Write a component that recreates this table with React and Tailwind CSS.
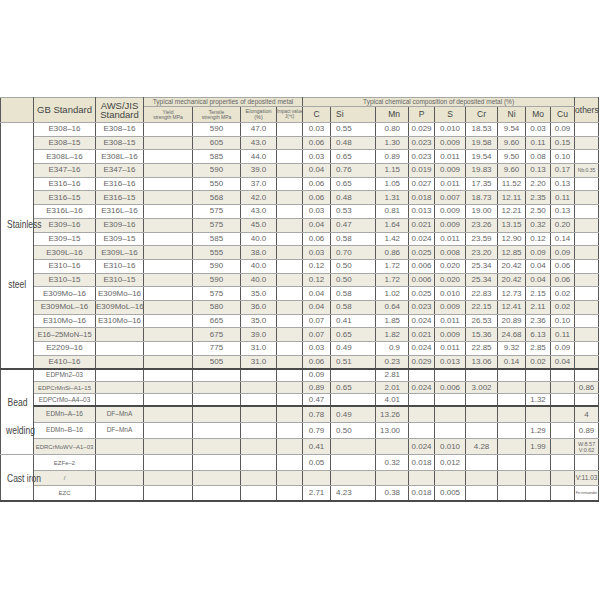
import React from 'react';

const colWidths = [33, 62, 48, 49, 48, 36, 26, 28, 45, 33, 26, 31, 32, 28, 25, 24, 24];

const stainless = [
  ['E308–16', 'E308–16', '590', '47.0', ['0.03', '0.55', '0.80', '0.029', '0.010', '18.53', '9.54', '0.03', '0.09'], ''],
  ['E308–15', 'E308–15', '605', '43.0', ['0.06', '0.48', '1.30', '0.023', '0.009', '19.58', '9.60', '0.11', '0.15'], ''],
  ['E308L–16', 'E308L–16', '585', '44.0', ['0.03', '0.65', '0.89', '0.023', '0.011', '19.54', '9.50', '0.08', '0.10'], ''],
  ['E347–16', 'E347–16', '590', '39.0', ['0.04', '0.76', '1.15', '0.019', '0.009', '19.83', '9.60', '0.13', '0.17'], 'Nb:0.35'],
  ['E316–16', 'E316–16', '550', '37.0', ['0.06', '0.65', '1.05', '0.027', '0.011', '17.35', '11.52', '2.20', '0.13'], ''],
  ['E316–15', 'E316–15', '568', '42.0', ['0.06', '0.48', '1.31', '0.018', '0.007', '18.73', '12.11', '2.35', '0.11'], ''],
  ['E316L–16', 'E316L–16', '575', '43.0', ['0.03', '0.53', '0.81', '0.013', '0.009', '19.00', '12.21', '2.50', '0.13'], ''],
  ['E309–16', 'E309–16', '575', '45.0', ['0.04', '0.47', '1.64', '0.021', '0.009', '23.26', '13.15', '0.32', '0.20'], ''],
  ['E309–15', 'E309–15', '585', '40.0', ['0.06', '0.58', '1.42', '0.024', '0.011', '23.59', '12.90', '0.12', '0.14'], ''],
  ['E309L–16', 'E309L–16', '555', '38.0', ['0.03', '0.70', '0.86', '0.025', '0.008', '23.20', '12.85', '0.09', '0.09'], ''],
  ['E310–16', 'E310–16', '590', '40.0', ['0.12', '0.50', '1.72', '0.006', '0.020', '25.34', '20.42', '0.04', '0.06'], ''],
  ['E310–15', 'E310–15', '590', '40.0', ['0.12', '0.50', '1.72', '0.006', '0.020', '25.34', '20.42', '0.04', '0.06'], ''],
  ['E309Mo–16', 'E309Mo–16', '575', '35.0', ['0.04', '0.58', '1.02', '0.025', '0.010', '22.83', '12.73', '2.15', '0.02'], ''],
  ['E309MoL–16', 'E309MoL–16', '580', '36.0', ['0.04', '0.58', '0.64', '0.023', '0.009', '22.15', '12.41', '2.11', '0.02'], ''],
  ['E310Mo–16', 'E310Mo–16', '665', '35.0', ['0.07', '0.41', '1.85', '0.024', '0.011', '26.53', '20.89', '2.36', '0.10'], ''],
  ['E16–25MoN–15', '', '675', '39.0', ['0.07', '0.65', '1.82', '0.021', '0.009', '15.36', '24.68', '6.13', '0.11'], ''],
  ['E2209–16', '', '775', '31.0', ['0.03', '0.49', '0.9', '0.024', '0.011', '22.85', '9.32', '2.85', '0.09'], ''],
  ['E410–16', '', '505', '31.0', ['0.06', '0.51', '0.23', '0.029', '0.013', '13.06', '0.14', '0.02', '0.04'], ''],
];

const bead = [
  ['EDPMn2–03', '', '', '', ['0.09', '', '2.81', '', '', '', '', '', ''], ''],
  ['EDPCrMnSi–A1–15', '', '', '', ['0.89', '0.65', '2.01', '0.024', '0.006', '3.002', '', '', ''], '0.86'],
  ['EDPCrMo–A4–03', '', '', '', ['0.47', '', '4.01', '', '', '', '', '1.32', ''], ''],
  ['EDMn–A–16', 'DF–MnA', '', '', ['0.78', '0.49', '13.26', '', '', '', '', '', ''], '4'],
  ['EDMn–B–16', 'DF–MnA', '', '', ['0.79', '0.50', '13.00', '', '', '', '', '1.29', ''], '0.89'],
  ['EDRCrMoWV–A1–03', '', '', '', ['0.41', '', '', '0.024', '0.010', '4.28', '', '1.99', ''], 'W:8.57 V:0.62'],
];

const castIron = [
  ['EZFe–2', '', '', '', ['0.05', '', '0.32', '0.018', '0.012', '', '', '', ''], ''],
  ['/', '', '', '', ['', '', '', '', '', '', '', '', ''], 'V:11.03'],
  ['EZC', '', '', '', ['2.71', '4.23', '0.38', '0.018', '0.005', '', '', '', ''], 'Fe:remainder'],
];

const cell = 'border-x border-x-[#5a5a5a] border-y border-y-[#a8a8a8] p-0 leading-none align-middle';
const thick = 'border-b-2 border-b-[#4a4a4a]';
const head = 'bg-[#e8e4d0]';

const chemAlign = (i) => {
  if (i === 1) return 'text-left pl-[5px]';
  if (i === 2) return 'text-right pr-[8px]';
  return 'text-center';
};

const othersText = (o) => {
  if (!o) return null;
  if (o === 'W:8.57 V:0.62') {
    return (
      <div className="text-[5.5px] leading-[6px]">
        W:8.57
        <br />
        V:0.62
      </div>
    );
  }
  if (o === 'Nb:0.35') {
    return <div className="text-[5px] whitespace-nowrap">{o}</div>;
  }
  if (o === 'Fe:remainder') {
    return <div className="text-[4px] tracking-tighter whitespace-nowrap">{o}</div>;
  }
  if (o === 'V:11.03') return <span className="text-[6.5px] whitespace-nowrap">{o}</span>;
  return o;
};

const DataRow = ({ row, alt, height, bottom, category, gbSize }) => {
  const [gb, aws, ts, el, chem, oth] = row;
  const b = bottom ? thick : '';
  return (
    <tr className={`${height} ${alt ? 'bg-[#eeece1]' : 'bg-white'}`}>
      {category}
      <td className={`${cell} ${b} text-center whitespace-nowrap ${gbSize}`}>{gb}</td>
      <td className={`${cell} ${b} text-center whitespace-nowrap ${gbSize}`}>{aws}</td>
      <td className={`${cell} ${b}`}></td>
      <td className={`${cell} ${b} text-center`}>{ts}</td>
      <td className={`${cell} ${b} text-center`}>{el}</td>
      <td className={`${cell} ${b}`}></td>
      {chem.map((v, i) => (
        <td key={i} className={`${cell} ${b} ${chemAlign(i)}`}>
          {v}
        </td>
      ))}
      <td className={`${cell} ${b} text-center`}>{othersText(oth)}</td>
    </tr>
  );
};

const Label = ({ children }) => (
  <span className="inline-block text-[11.5px] leading-[12px] text-[#444] scale-x-[0.74] origin-center whitespace-nowrap">
    {children}
  </span>
);

export default function App() {
  return (
    <div className="w-[600px] h-[600px] bg-white pt-[97px] font-['Liberation_Sans',Arial,sans-serif] text-[#666]">
      <table className="table-fixed border-collapse w-[598px] text-[8px] border-l border-l-[#4a4a4a]">
        <colgroup>
          {colWidths.map((w, i) => (
            <col key={i} style={{ width: w }} />
          ))}
        </colgroup>
        <thead>
          <tr className="h-[9px]">
            <td rowSpan={2} className={`${cell} ${head}`}></td>
            <td rowSpan={2} className={`${cell} ${head} text-center text-[9.5px] text-[#444]`}>
              GB Standard
            </td>
            <td rowSpan={2} className={`${cell} ${head} text-center text-[9.5px] leading-[10px] text-[#444]`}>
              AWS/JIS
              <br />
              Standard
            </td>
            <td colSpan={4} className={`${cell} ${head} text-center text-[6.5px] whitespace-nowrap`}>
              Typical mechanical properties of deposited metal
            </td>
            <td colSpan={9} className={`${cell} ${head} text-center text-[6.5px] whitespace-nowrap`}>
              Typical chemical composition of deposited metal (%)
            </td>
            <td rowSpan={2} className={`${cell} ${head} text-center text-[8.5px] text-[#444]`}>
              others
            </td>
          </tr>
          <tr className="h-[16px]">
            <td className={`${cell} ${head} text-center text-[5px] leading-[6px]`}>
              Yield
              <br />
              strength MPa
            </td>
            <td className={`${cell} ${head} text-center text-[5px] leading-[6px]`}>
              Tensile
              <br />
              strength MPa
            </td>
            <td className={`${cell} ${head} text-center text-[5.5px] leading-[6px]`}>
              Elongation
              <br />
              (%)
            </td>
            <td className={`${cell} ${head} text-center text-[4.5px] leading-[6px] overflow-hidden whitespace-nowrap`}>
              Impact value
              <br />
              J(℃)
            </td>
            {['C', 'Si', 'Mn', 'P', 'S', 'Cr', 'Ni', 'Mo', 'Cu'].map((h, i) => (
              <td key={h} className={`${cell} ${head} text-[8.5px] text-[#444] ${chemAlign(i)}`}>
                {h}
              </td>
            ))}
          </tr>
        </thead>
        <tbody>
          {stainless.map((row, i) => (
            <DataRow
              key={'s' + i}
              row={row}
              alt={i % 2 === 1}
              height="h-[13.7px]"
              bottom={i === stainless.length - 1}
              gbSize={i === 15 ? 'text-[7.5px]' : 'text-[8px]'}
              category={
                i === 0 ? (
                  <td rowSpan={stainless.length} className={`${cell} ${thick} bg-white align-top text-center`}>
                    <div className="pt-[95px]">
                      <Label>Stainless</Label>
                    </div>
                    <div className="mt-[48px]">
                      <Label>steel</Label>
                    </div>
                  </td>
                ) : null
              }
            />
          ))}
          {bead.map((row, i) => (
            <DataRow
              key={'b' + i}
              row={row}
              alt={i % 2 === 1}
              height={i < 3 ? 'h-[12.5px]' : 'h-[16.2px]'}
              bottom={i === 2}
              gbSize={i === 1 || i === 5 ? 'text-[6px]' : 'text-[6.5px]'}
              category={
                i === 0 ? (
                  <td rowSpan={bead.length} className={`${cell} bg-white align-top text-center`}>
                    <div className="pt-[26px]">
                      <Label>Bead</Label>
                    </div>
                    <div className="mt-[16px]">
                      <Label>welding</Label>
                    </div>
                  </td>
                ) : null
              }
            />
          ))}
          {castIron.map((row, i) => (
            <DataRow
              key={'c' + i}
              row={row}
              alt={i % 2 === 1}
              height="h-[15.3px]"
              bottom={i === castIron.length - 1}
              gbSize="text-[6px]"
              category={
                i === 0 ? (
                  <td rowSpan={castIron.length} className={`${cell} ${thick} bg-white text-center`}>
                    <Label>Cast iron</Label>
                  </td>
                ) : null
              }
            />
          ))}
        </tbody>
      </table>
    </div>
  );
}
